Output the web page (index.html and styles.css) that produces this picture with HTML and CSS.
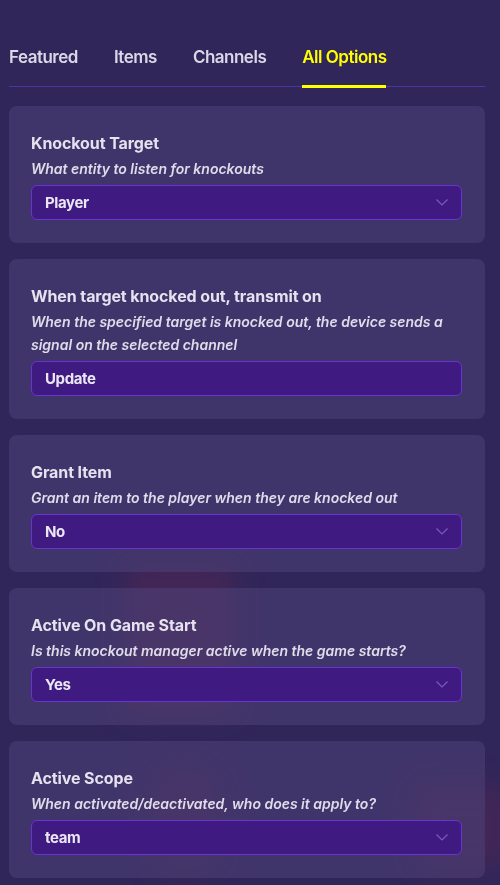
FILE: index.html
```html
<!DOCTYPE html>
<html>
<head>
<meta charset="utf-8">
<link rel="stylesheet" href="styles.css">
</head>
<body>
<div class="bg">
  <div class="blob blob-a"></div>
  <div class="blob blob-b"></div>
  <div class="blob blob-c"></div>
</div>
<main class="page">
  <nav class="tabs">
    <span class="tab">Featured</span>
    <span class="tab">Items</span>
    <span class="tab">Channels</span>
    <span class="tab active">All Options</span>
  </nav>
  <section class="cards">
    <div class="card">
      <div class="title">Knockout Target</div>
      <div class="desc">What entity to listen for knockouts</div>
      <div class="select"><span>Player</span><svg class="chev" viewBox="0 0 12 7"><path d="M0.5 0.5 L6 6 L11.5 0.5"/></svg></div>
    </div>
    <div class="card">
      <div class="title">When target knocked out, transmit on</div>
      <div class="desc">When the specified target is knocked out, the device sends a signal on the selected channel</div>
      <div class="select"><span>Update</span></div>
    </div>
    <div class="card">
      <div class="title">Grant Item</div>
      <div class="desc">Grant an item to the player when they are knocked out</div>
      <div class="select"><span>No</span><svg class="chev" viewBox="0 0 12 7"><path d="M0.5 0.5 L6 6 L11.5 0.5"/></svg></div>
    </div>
    <div class="card">
      <div class="title">Active On Game Start</div>
      <div class="desc">Is this knockout manager active when the game starts?</div>
      <div class="select"><span>Yes</span><svg class="chev" viewBox="0 0 12 7"><path d="M0.5 0.5 L6 6 L11.5 0.5"/></svg></div>
    </div>
    <div class="card">
      <div class="title">Active Scope</div>
      <div class="desc">When activated/deactivated, who does it apply to?</div>
      <div class="select"><span>team</span><svg class="chev" viewBox="0 0 12 7"><path d="M0.5 0.5 L6 6 L11.5 0.5"/></svg></div>
    </div>
  </section>
</main>
</body>
</html>
```
FILE: styles.css
```css
html, body {
  margin: 0;
  padding: 0;
  height: 100%;
  overflow: hidden;
}
body {
  background: #30265a;
  font-family: Inter, "Noto Sans", sans-serif;
  color: #e4e0ee;
}
.bg {
  position: fixed;
  inset: 0;
  z-index: 0;
  pointer-events: none;
}
.blob {
  position: absolute;
  filter: blur(14px);
}
.blob-a {
  left: 125px;
  top: 565px;
  width: 110px;
  height: 150px;
  background: rgba(110, 40, 80, 0.35);
  border-radius: 10px;
}
.blob-b {
  left: 415px;
  top: 785px;
  width: 95px;
  height: 85px;
  background: rgba(110, 40, 80, 0.3);
  border-radius: 10px;
}
.blob-c {
  left: 150px;
  top: 765px;
  width: 70px;
  height: 110px;
  background: rgba(100, 40, 80, 0.3);
  border-radius: 30px;
}
.page {
  position: relative;
  z-index: 1;
  padding: 0 15px 0 9px;
}
.tabs {
  display: flex;
  gap: 36px;
  padding-top: 44px;
  border-bottom: 1px solid #4d33a6;
}
.tab {
  font-size: 17px;
  font-weight: 600;
  letter-spacing: -0.5px;
  line-height: 26px;
  padding-bottom: 15px;
  color: #dcd7e8;
  border-bottom: 3px solid transparent;
  margin-bottom: -2px;
}
.tab.active {
  color: #ffff00;
  border-bottom-color: #ffff00;
}
.cards {
  display: flex;
  flex-direction: column;
  gap: 16px;
  margin-top: 19px;
}
.card {
  background: rgba(78, 66, 120, 0.55);
  border-radius: 8px;
  padding: 25px 23px 23px 22px;
}
.title {
  font-size: 16px;
  font-weight: 700;
  line-height: 24px;
  letter-spacing: -0.1px;
  color: #e6e2ef;
  margin-bottom: 2px;
}
.desc {
  font-size: 14px;
  font-style: italic;
  font-weight: 600;
  line-height: 23px;
  letter-spacing: 0;
  color: #e0dcea;
  margin-bottom: 5px;
}
.select {
  height: 33px;
  background: #3f1a80;
  border: 1px solid #6a33d4;
  border-radius: 6px;
  display: flex;
  align-items: center;
  justify-content: space-between;
  padding: 0 13px 0 13px;
}
.select span {
  font-size: 15px;
  font-weight: 700;
  letter-spacing: -0.4px;
  color: #ebe6f4;
}
.chev {
  width: 12px;
  height: 7px;
  fill: none;
  stroke: #7b5cb8;
  stroke-width: 1.2;
}
```
